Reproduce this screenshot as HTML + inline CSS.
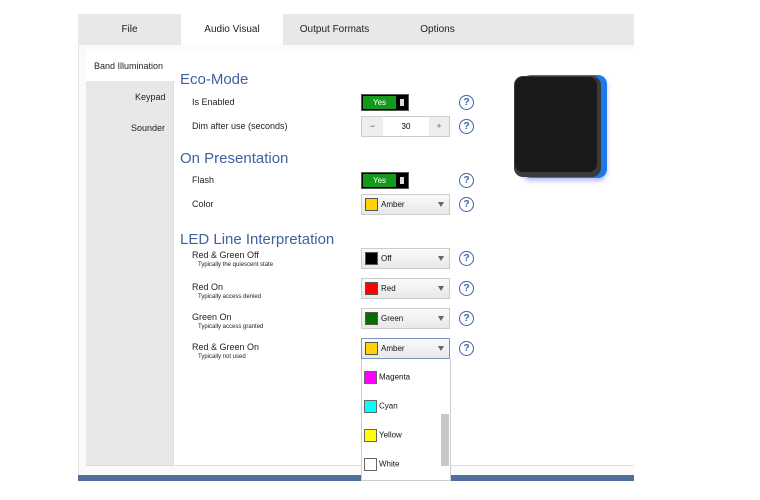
<!DOCTYPE html>
<html><head><style>
body{margin:0;width:760px;height:500px;background:#fff;position:relative;font-family:"Liberation Sans",sans-serif;overflow:hidden}
.a{position:absolute}
.tab{position:absolute;top:14px;height:31px;line-height:31px;font-size:10px;color:#222;text-align:center}
.h{position:absolute;left:180px;font-size:15px;color:#3e62a0}
.l{position:absolute;left:192px;font-size:9px;color:#222}
.s{position:absolute;left:198px;font-size:6px;color:#222}
.tg{position:absolute;left:361px;width:48px;height:17px;background:#000;border:1px solid #555;box-sizing:border-box}
.tg b{position:absolute;left:1px;top:1px;width:33px;height:13px;background:#139a1b;color:#fff;font-size:8px;font-weight:normal;text-align:center;line-height:13px}
.tg i{position:absolute;left:38px;top:4px;width:4px;height:7px;background:#ddd}
.dd{position:absolute;left:361px;width:89px;height:21px;border:1px solid #ccc;box-sizing:border-box;background:linear-gradient(#fafafa,#e8e8e8);font-size:8px;color:#111}
.dd .sw{position:absolute;left:3px;top:3px;width:13px;height:13px;border:1px solid #555;box-sizing:border-box}
.dd .t{position:absolute;left:19px;top:5px}
.dd .ar{position:absolute;left:76px;top:7px;width:0;height:0;border-left:3.5px solid transparent;border-right:3.5px solid transparent;border-top:5px solid #666}
.q{position:absolute;left:459px;width:13px;height:13px;border:1.3px solid #3e62a0;border-radius:50%;color:#3e62a0;font-size:10px;font-weight:bold;text-align:center;line-height:13px}
.it{position:absolute;left:364px;font-size:8px;color:#111}
.it span{display:inline-block;width:13px;height:13px;border:1px solid #666;box-sizing:border-box;vertical-align:middle;margin-right:2px}
</style></head><body>
<div class="a" style="left:78px;top:14px;width:556px;height:31px;background:#e8e8e8"></div>
<div class="a" style="left:181px;top:14px;width:102px;height:32px;background:#fff"></div>
<div class="tab" style="left:78px;width:103px">File</div>
<div class="tab" style="left:181px;width:102px">Audio Visual</div>
<div class="tab" style="left:283px;width:103px">Output Formats</div>
<div class="tab" style="left:386px;width:103px">Options</div>
<div class="a" style="left:78px;top:45px;width:556px;height:430px;background:#fafafa;border-left:1px solid #e4e4e4;box-sizing:border-box"></div>
<div class="a" style="left:86px;top:51px;width:548px;height:414px;background:#fff;border-bottom:1px solid #ddd"></div>
<div class="a" style="left:86px;top:81px;width:88px;height:384px;background:#e8e8e8;border-right:1px solid #ddd;box-sizing:border-box"></div>
<div class="a" style="left:94px;top:61px;font-size:9px;color:#222">Band Illumination</div>
<div class="a" style="left:135px;top:92px;font-size:9px;color:#222">Keypad</div>
<div class="a" style="left:131px;top:123px;font-size:9px;color:#222">Sounder</div>
<div class="a" style="left:78px;top:475px;width:556px;height:6px;background:#4f6e9e"></div>

<div class="h" style="top:71px">Eco-Mode</div>
<div class="l" style="top:97px">Is Enabled</div>
<div class="tg" style="top:94px"><b>Yes</b><i></i></div>
<div class="q" style="top:95px">?</div>
<div class="l" style="top:121px">Dim after use (seconds)</div>
<div class="a" style="left:361px;top:116px;width:89px;height:21px;border:1px solid #ccc;box-sizing:border-box;background:#fff;font-size:9px">
<div class="a" style="left:0;top:0;width:21px;height:19px;background:#eee;text-align:center;line-height:19px;color:#444">−</div>
<div class="a" style="left:21px;top:0;width:46px;height:19px;text-align:center;line-height:19px;font-size:8px">30</div>
<div class="a" style="left:67px;top:0;width:20px;height:19px;background:#eee;text-align:center;line-height:19px;color:#666">+</div></div>
<div class="q" style="top:119px">?</div>

<div class="h" style="top:150px">On Presentation</div>
<div class="l" style="top:175px">Flash</div>
<div class="tg" style="top:172px"><b>Yes</b><i></i></div>
<div class="q" style="top:173px">?</div>
<div class="l" style="top:199px">Color</div>
<div class="dd" style="top:194px"><div class="sw" style="background:#ffd200"></div><div class="t">Amber</div><div class="ar"></div></div>
<div class="q" style="top:197px">?</div>

<div class="h" style="top:231px">LED Line Interpretation</div>
<div class="l" style="top:250px">Red &amp; Green Off</div><div class="s" style="top:262px">Typically the quiescent state</div>
<div class="dd" style="top:248px"><div class="sw" style="background:#000"></div><div class="t">Off</div><div class="ar"></div></div>
<div class="q" style="top:251px">?</div>
<div class="l" style="top:282px">Red On</div><div class="s" style="top:294px">Typically access denied</div>
<div class="dd" style="top:278px"><div class="sw" style="background:#f00"></div><div class="t">Red</div><div class="ar"></div></div>
<div class="q" style="top:281px">?</div>
<div class="l" style="top:312px">Green On</div><div class="s" style="top:324px">Typically access granted</div>
<div class="dd" style="top:308px"><div class="sw" style="background:#007000"></div><div class="t">Green</div><div class="ar"></div></div>
<div class="q" style="top:311px">?</div>
<div class="l" style="top:342px">Red &amp; Green On</div><div class="s" style="top:354px">Typically not used</div>
<div class="dd" style="top:338px;border-color:#7a95c0"><div class="sw" style="background:#ffd200"></div><div class="t">Amber</div><div class="ar"></div></div>
<div class="q" style="top:341px">?</div>

<div class="a" style="left:361px;top:359px;width:90px;height:122px;background:#fff;border:1px solid #ccc;border-top:none;box-sizing:border-box"></div>
<div class="a" style="left:441px;top:414px;width:8px;height:52px;background:#c8c8c8"></div>
<div class="it" style="top:371px"><span style="background:#f0f"></span>Magenta</div>
<div class="it" style="top:400px"><span style="background:#0ff"></span>Cyan</div>
<div class="it" style="top:429px"><span style="background:#ff0"></span>Yellow</div>
<div class="it" style="top:458px"><span style="background:#fff"></span>White</div>

<div class="a" style="left:522px;top:75px;width:85px;height:103px;background:#1e78e8;border-radius:9px;box-shadow:0 3px 5px rgba(80,90,255,.4)"></div>
<div class="a" style="left:514px;top:76px;width:87px;height:101px;background:#3a3a3a;border-radius:9px"></div>
<div class="a" style="left:515px;top:77px;width:82px;height:95px;background:#1a1a1a;border-radius:8px"></div>
</body></html>
